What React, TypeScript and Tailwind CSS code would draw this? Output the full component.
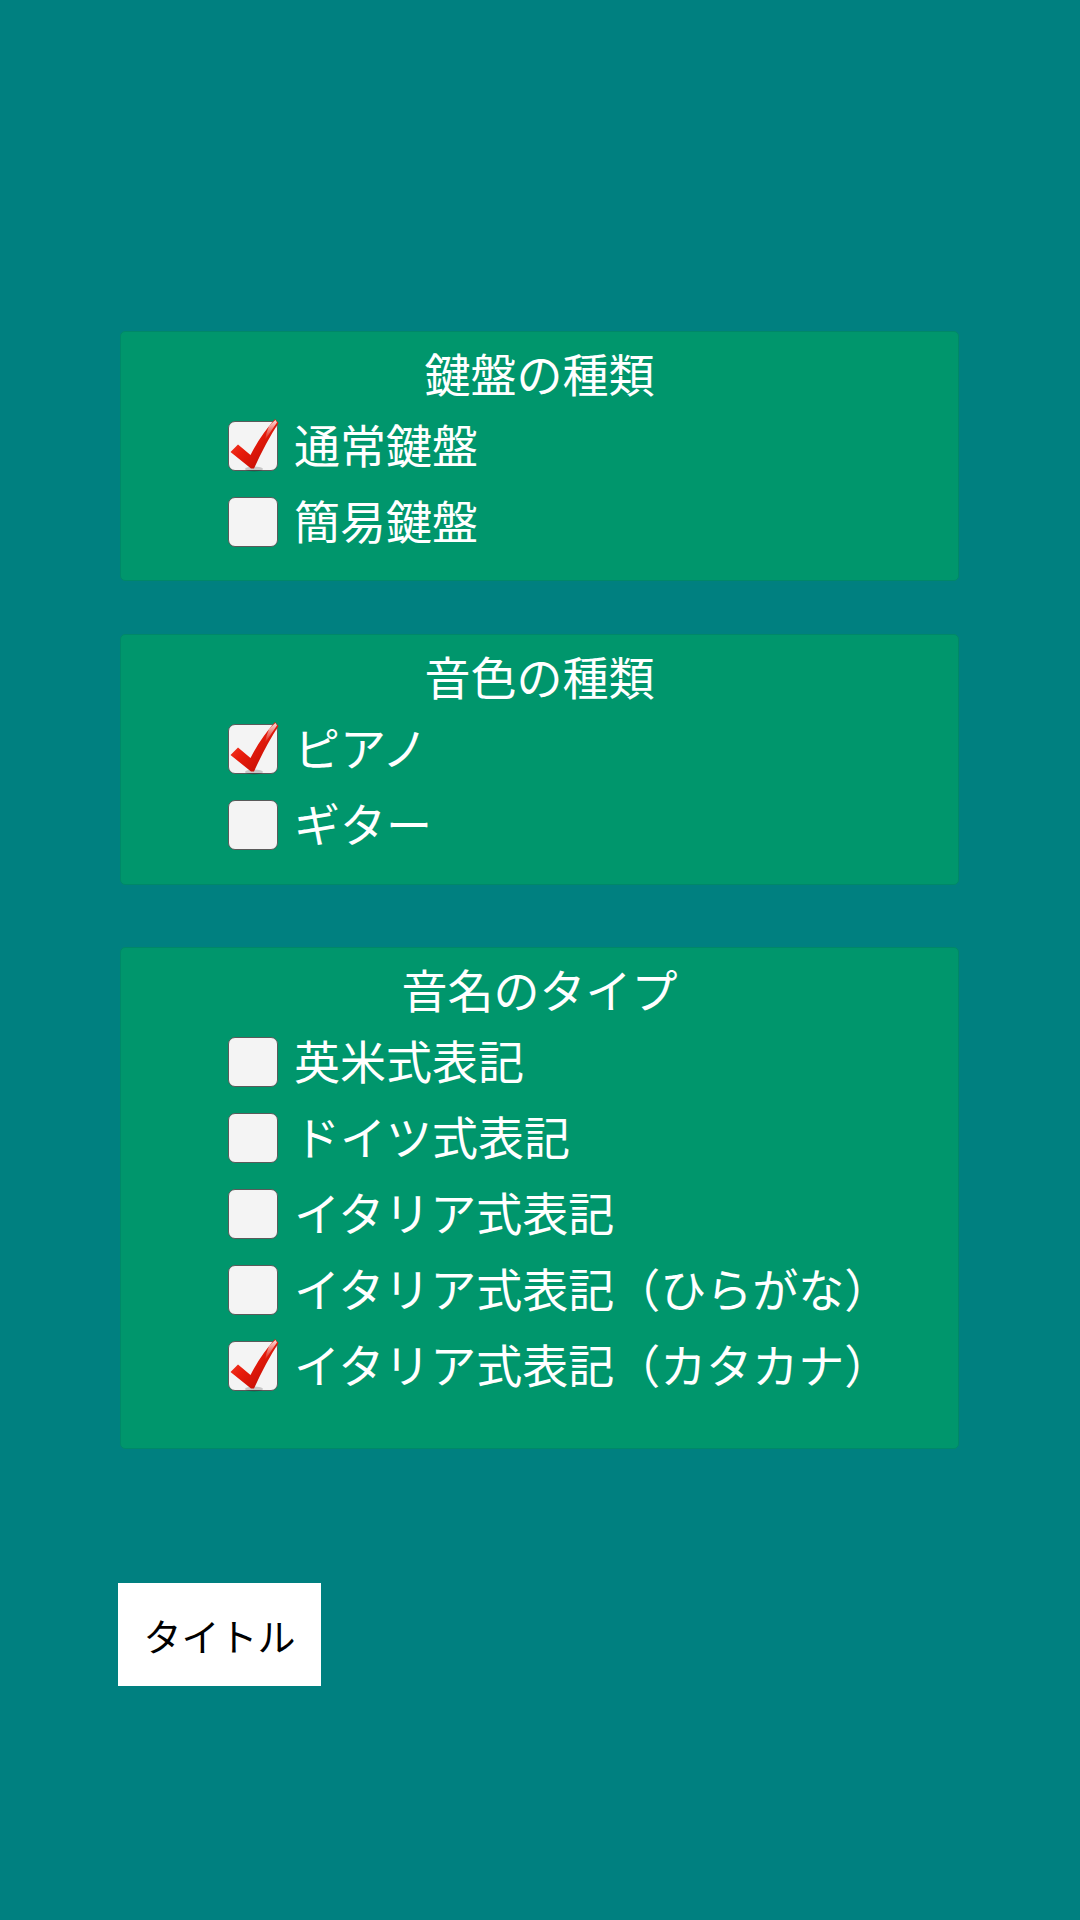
import React from "react";

const FONT = "font-['Noto_Sans_CJK_JP','Noto_Sans',sans-serif]";

function Check() {
  return (
    <svg
      className="absolute left-0 top-0 overflow-visible"
      width="50"
      height="50"
      viewBox="0 0 50 50"
    >
      <defs>
        <linearGradient id="ck" x1="0" y1="0" x2="1" y2="1">
          <stop offset="0" stopColor="#ff5a40" />
          <stop offset="0.45" stopColor="#e81c0c" />
          <stop offset="1" stopColor="#b30800" />
        </linearGradient>
        <linearGradient id="hl" x1="0" y1="0" x2="0" y2="1">
          <stop offset="0" stopColor="#ffffff" stopOpacity="0.85" />
          <stop offset="1" stopColor="#ffffff" stopOpacity="0" />
        </linearGradient>
      </defs>
      <ellipse cx="25" cy="47" rx="9" ry="2.5" fill="#000" opacity="0.18" />
      <path
        d="M1.5 30 L9 22.5 L21.5 33 Q31 14 46 -3 L49.5 1 Q37 20 25 46.5 L22 46.5 Z"
        fill="url(#ck)"
      />
      <path
        d="M40 4 Q44 0 46.5 -2 L48 0.5 Q42 9 36 18 Q37 11 40 4 Z"
        fill="url(#hl)"
      />
    </svg>
  );
}

function Row({ label, checked }: { label: string; checked?: boolean }) {
  return (
    <div className="flex items-center gap-[16px] h-[50px]">
      <div className="relative w-[50px] h-[50px] shrink-0 rounded-[7px] border-[1.5px] border-[#5a5a5a] bg-[#f4f4f4]">
        {checked && <Check />}
      </div>
      <span className="pb-[7px] text-white text-[46px] leading-[46px] whitespace-nowrap">
        {label}
      </span>
    </div>
  );
}

function Panel({
  title,
  items,
  pb,
}: {
  title: string;
  items: { label: string; checked?: boolean }[];
  pb: string;
}) {
  return (
    <div
      className={`w-[839px] rounded-[5px] border border-[#008868] bg-[#00966c] pt-[17px] ${pb}`}
    >
      <div className="text-center text-white text-[46px] leading-[46px]">
        {title}
      </div>
      <div className="mt-[26px] flex flex-col gap-[26px] pl-[107px]">
        {items.map((it) => (
          <Row key={it.label} label={it.label} checked={it.checked} />
        ))}
      </div>
    </div>
  );
}

export default function App() {
  return (
    <div className={`w-[1080px] h-[1920px] bg-[#008080] ${FONT} pt-[331px] pl-[120px]`}>
      <Panel
        title="鍵盤の種類"
        pb="pb-[33px]"
        items={[
          { label: "通常鍵盤", checked: true },
          { label: "簡易鍵盤" },
        ]}
      />
      <div className="h-[53px]" />
      <Panel
        title="音色の種類"
        pb="pb-[34px]"
        items={[
          { label: "ピアノ", checked: true },
          { label: "ギター" },
        ]}
      />
      <div className="h-[62px]" />
      <Panel
        title="音名のタイプ"
        pb="pb-[57px]"
        items={[
          { label: "英米式表記" },
          { label: "ドイツ式表記" },
          { label: "イタリア式表記" },
          { label: "イタリア式表記（ひらがな）" },
          { label: "イタリア式表記（カタカナ）", checked: true },
        ]}
      />
      <div className="h-[134px]" />
      <button className="-ml-[2px] flex h-[103px] w-[203px] items-center justify-center bg-white text-[38px] leading-[38px] text-black">
        タイトル
      </button>
    </div>
  );
}
